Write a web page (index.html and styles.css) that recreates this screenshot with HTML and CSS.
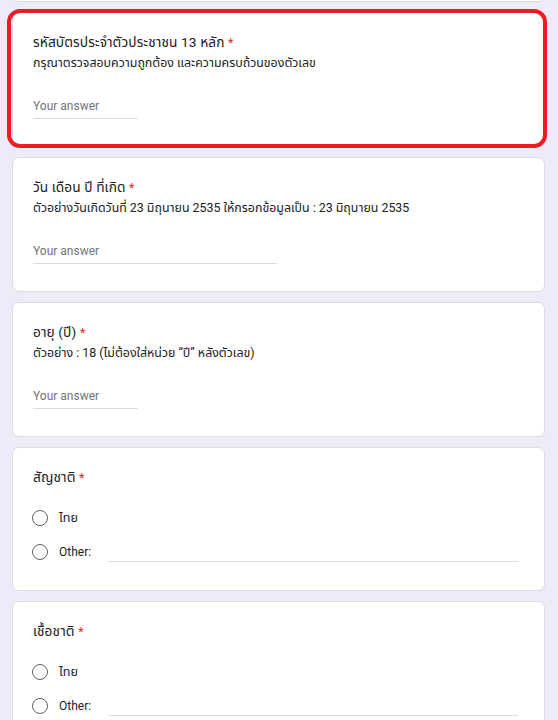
FILE: index.html
```html
<!DOCTYPE html>
<html lang="th">
<head>
<meta charset="utf-8">
<title>แบบฟอร์ม</title>
<link rel="stylesheet" href="styles.css">
</head>
<body>
<main class="form">
  <div class="card stub"></div>

  <section class="card q highlighted">
    <div class="title">รหัสบัตรประจำตัวประชาชน 13 หลัก <span class="req">*</span></div>
    <div class="desc">กรุณาตรวจสอบความถูกต้อง และความครบถ้วนของตัวเลข</div>
    <input class="answer short" type="text" placeholder="Your answer">
  </section>

  <section class="card q">
    <div class="title">วัน เดือน ปี ที่เกิด <span class="req">*</span></div>
    <div class="desc">ตัวอย่างวันเกิดวันที่ 23 มิถุนายน 2535 ให้กรอกข้อมูลเป็น : 23 มิถุนายน 2535</div>
    <input class="answer long" type="text" placeholder="Your answer">
  </section>

  <section class="card q">
    <div class="title">อายุ (ปี) <span class="req">*</span></div>
    <div class="desc">ตัวอย่าง : 18 (ไม่ต้องใส่หน่วย “ปี” หลังตัวเลข)</div>
    <input class="answer short" type="text" placeholder="Your answer">
  </section>

  <section class="card q choice">
    <div class="title">สัญชาติ <span class="req">*</span></div>
    <div class="options">
      <div class="opt"><span class="radio"></span><span class="label thai">ไทย</span></div>
      <div class="opt"><span class="radio"></span><span class="label">Other:</span><input class="other" type="text"></div>
    </div>
  </section>

  <section class="card q choice">
    <div class="title">เชื้อชาติ <span class="req">*</span></div>
    <div class="options">
      <div class="opt"><span class="radio"></span><span class="label thai">ไทย</span></div>
      <div class="opt"><span class="radio"></span><span class="label">Other:</span><input class="other" type="text"></div>
    </div>
  </section>
</main>
</body>
</html>
```

FILE: styles.css
```css
* { box-sizing: border-box; }

html, body {
  margin: 0;
  background: #efeaf8;
}

body {
  font-family: Roboto, "Noto Sans Thai", "Noto Sans", "DejaVu Sans", sans-serif;
  color: #202124;
  overflow: hidden;
}

.form {
  display: flex;
  flex-direction: column;
  gap: 10px;
  padding: 0 13px 0 12px;
}

.card {
  background: #fff;
  border: 1px solid #dadce0;
  border-radius: 7px;
}

.stub {
  height: 20px;
  margin-top: -18px;
}

.q {
  padding: 19px 20px 27px;
  display: flex;
  flex-direction: column;
  align-items: flex-start;
}

.choice {
  padding-bottom: 21px;
}

.title {
  height: 20px;
  font-size: 13.7px;
  line-height: 20px;
  letter-spacing: 0.1px;
  white-space: nowrap;
}

.req {
  color: #d93025;
  font-size: 12.5px;
  line-height: 0;
}

.desc {
  height: 20px;
  margin-top: 1px;
  font-size: 12.4px;
  line-height: 20px;
  white-space: nowrap;
}

.answer {
  margin-top: 25px;
  height: 21px;
  padding: 0 0 4px;
  border: none;
  border-bottom: 1px solid #dadce0;
  font-family: Roboto, "Noto Sans Thai", sans-serif;
  font-size: 12px;
  color: #202124;
  background: transparent;
  outline: none;
}

.answer::placeholder {
  color: #70757a;
  opacity: 1;
}

.short { width: 105px; }
.long { width: 244px; }

.options {
  margin-top: 14px;
  display: flex;
  flex-direction: column;
  align-self: stretch;
}

.opt {
  height: 34px;
  display: flex;
  align-items: center;
}

.radio {
  width: 16px;
  height: 16px;
  margin-left: -1px;
  border: 1.7px solid #5f6368;
  border-radius: 50%;
  flex: none;
}

.label {
  margin-left: 11px;
  font-size: 12px;
  line-height: 20px;
}

.label.thai {
  font-size: 12.6px;
}

.other {
  flex: 1;
  margin: 0 6px 0 17px;
  height: 21px;
  align-self: flex-end;
  margin-bottom: 7px;
  border: none;
  border-bottom: 1px solid #dadce0;
  background: transparent;
  outline: none;
}

.highlighted {
  position: relative;
}

.highlighted::after {
  content: "";
  position: absolute;
  top: -4px;
  left: -6px;
  right: -3px;
  bottom: -2px;
  border: 4px solid #ed1c24;
  border-radius: 13px;
  pointer-events: none;
}
```
